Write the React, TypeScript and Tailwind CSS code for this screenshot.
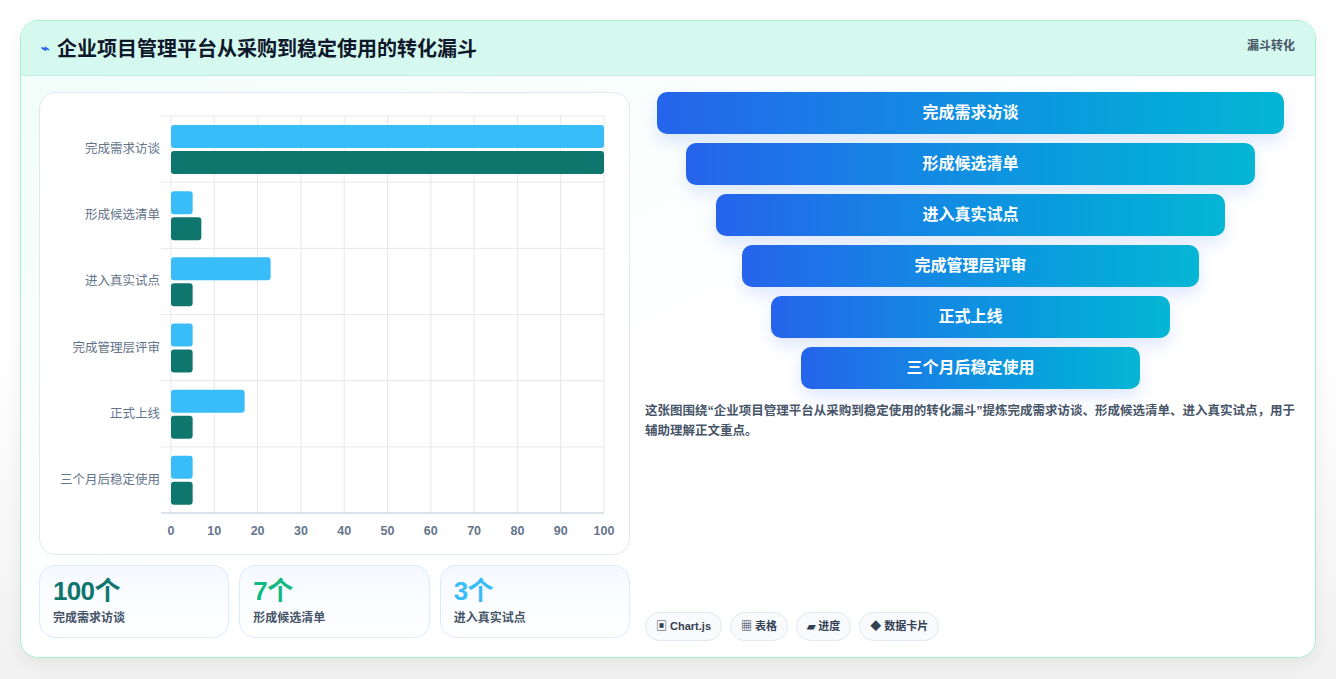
import React from "react";

const cats = ["完成需求访谈", "形成候选清单", "进入真实试点", "完成管理层评审", "正式上线", "三个月后稳定使用"];
const blue = [100, 5, 23, 5, 17, 5];
const teal = [100, 7, 5, 5, 5, 5];
const widths = [627, 569, 509, 457, 399, 339];

function Chart() {
  const x0 = 131, x1 = 564, y0 = 23, y1 = 420;
  const rh = (y1 - y0) / 6;
  const sx = (v: number) => ((x1 - x0) * v) / 100;
  return (
    <svg width="590" height="462" className="block" style={{ fontFamily: "'Liberation Sans','Noto Sans CJK SC',sans-serif" }}>
      {Array.from({ length: 11 }).map((_, i) => (
        <line key={i} x1={x0 + sx(i * 10)} x2={x0 + sx(i * 10)} y1={y0} y2={y1} stroke="#e5e7eb" />
      ))}
      {Array.from({ length: 7 }).map((_, i) => (
        <line key={i} x1={x0 - 10} x2={x1} y1={y0 + rh * i} y2={y0 + rh * i} stroke="#e5e7eb" />
      ))}
      <line x1={x0 - 10} x2={x1} y1={y1} y2={y1} stroke="#cbd5e1" />
      {cats.map((c, i) => {
        const t = y0 + rh * i;
        return (
          <g key={c}>
            <text x={120} y={t + rh / 2 + 4} textAnchor="end" fontSize="12.5" fill="#64748b">{c}</text>
            <rect x={x0} y={t + 9} width={sx(blue[i])} height={23} rx={3} fill="#38bdf8" />
            <rect x={x0} y={t + 35} width={sx(teal[i])} height={23} rx={3} fill="#0f766e" />
          </g>
        );
      })}
      {Array.from({ length: 11 }).map((_, i) => (
        <text key={i} x={x0 + sx(i * 10)} y={442} textAnchor="middle" fontSize="12.5" fontWeight="bold" fill="#64748b">{i * 10}</text>
      ))}
    </svg>
  );
}

function Stat({ v, l, c }: { v: string; l: string; c: string }) {
  return (
    <div className="flex-1 h-[73px] rounded-2xl border border-[#dbeafe] bg-gradient-to-b from-[#f5f9ff] to-white px-[13px] pt-[9px]">
      <div className={`text-[26px] font-bold leading-[32px] tracking-tight ${c}`}>{v}</div>
      <div className="text-[12px] font-bold text-[#475569] mt-[2px]">{l}</div>
    </div>
  );
}

export default function App() {
  return (
    <div className="w-[1336px] h-[679px] bg-white p-0" style={{ fontFamily: "'Liberation Sans','Noto Sans CJK SC',sans-serif" }}>
      <div className="h-[679px] bg-gradient-to-b from-white via-white to-[#f1f1f1] pt-[20px] px-[20px]">
        <div className="w-[1296px] h-[638px] rounded-[18px] border border-[#a7f3d0] bg-gradient-to-br from-[#f0fdf9] via-white to-white shadow-[0_6px_16px_rgba(0,0,0,0.06)] overflow-hidden">
          <div className="h-[55px] bg-[#d5f8ef] border-b border-[#c8ece4] flex items-start justify-between px-[20px]">
            <div className="flex items-center gap-[8px] h-[55px]">
              <span className="text-[#2563eb] text-[14px] font-bold">⌁</span>
              <span className="text-[20px] font-bold text-[#0f172a]">企业项目管理平台从采购到稳定使用的转化漏斗</span>
            </div>
            <span className="text-[12px] font-bold text-[#475569] mt-[16px]">漏斗转化</span>
          </div>
          <div className="flex gap-[15px] px-[18px] pt-[16px]">
            <div className="w-[591px] flex flex-col gap-[10px]">
              <div className="h-[463px] rounded-2xl border border-[#e2e8f0] bg-white">
                <Chart />
              </div>
              <div className="flex gap-[10px]">
                <Stat v="100个" l="完成需求访谈" c="text-[#0f766e]" />
                <Stat v="7个" l="形成候选清单" c="text-[#10b981]" />
                <Stat v="3个" l="进入真实试点" c="text-[#38bdf8]" />
              </div>
            </div>
            <div className="w-[651px] flex flex-col">
              <div className="flex flex-col items-center gap-[9px]">
                {cats.map((c, i) => (
                  <div key={c} className="h-[42px] rounded-[10px] bg-gradient-to-r from-[#2563eb] to-[#06b6d4] shadow-[0_8px_16px_rgba(37,99,235,0.15)] flex items-center justify-center text-white text-[16px] font-bold" style={{ width: widths[i] }}>
                    {c}
                  </div>
                ))}
              </div>
              <p className="mt-[12px] text-[12.5px] leading-[20px] font-bold text-[#475569]">
                这张图围绕“企业项目管理平台从采购到稳定使用的转化漏斗”提炼完成需求访谈、形成候选清单、进入真实试点，用于辅助理解正文重点。
              </p>
              <div className="flex gap-[8px] mt-[171px]">
                {["▣ Chart.js", "▦ 表格", "▰ 进度", "◆ 数据卡片"].map((t) => (
                  <span key={t} className="h-[29px] px-[10px] rounded-full border border-[#e2e8f0] bg-[#f8fafc] text-[11px] font-bold text-[#334155] flex items-center">{t}</span>
                ))}
              </div>
            </div>
          </div>
        </div>
      </div>
    </div>
  );
}
